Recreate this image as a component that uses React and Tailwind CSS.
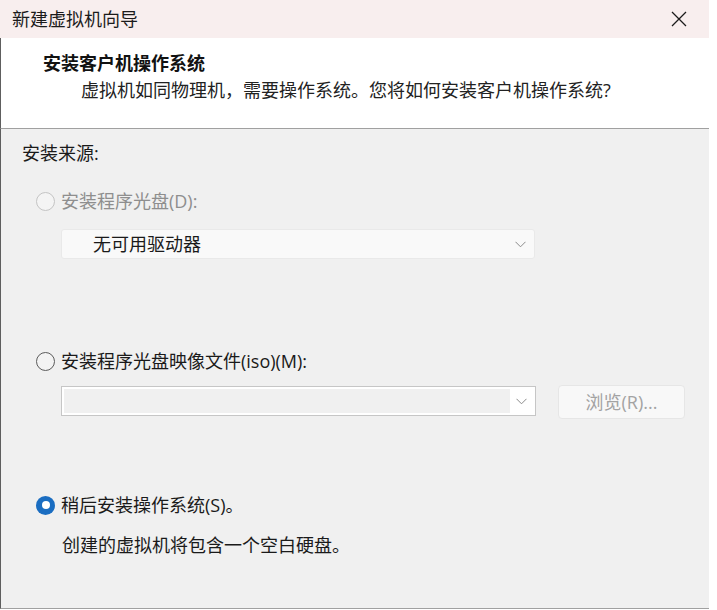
import React from "react";

const font = "font-['Open_Sans','Noto_Sans_CJK_SC',sans-serif]";

function Radio({ state }) {
  // state: "disabled" | "off" | "on"
  if (state === "on") {
    return (
      <span className="flex h-[19px] w-[19px] shrink-0 items-center justify-center rounded-full bg-[#1a6dc1]">
        <span className="h-[8px] w-[8px] rounded-full bg-white" />
      </span>
    );
  }
  const cls =
    state === "disabled"
      ? "border-[#c4c4c4] bg-[#f4f4f4]"
      : "border-[#5b5b5b] bg-[#f3f3f3]";
  return <span className={`h-[19px] w-[19px] shrink-0 rounded-full border ${cls}`} />;
}

function Chevron() {
  return (
    <svg width="11" height="7" viewBox="0 0 11 7" fill="none">
      <path d="M0.5 0.8 L5.5 5.8 L10.5 0.8" stroke="#8a8a8a" strokeWidth="1" />
    </svg>
  );
}

export default function App() {
  return (
    <div className={`w-[717px] h-[610px] bg-white ${font} text-[18px] text-[#1a1a1a]`}>
      <div className="flex h-[609px] w-[709px] flex-col">

        {/* Title bar */}
        <div className="flex h-[38px] shrink-0 items-center justify-between bg-[#f8eeee] pl-[12px] pr-[22px]">
          <span className="leading-[24px] text-[#1b1b1b]">新建虚拟机向导</span>
          <svg width="16" height="16" viewBox="0 0 16 16" fill="none">
            <path d="M1 1 L15 15 M15 1 L1 15" stroke="#1b1b1b" strokeWidth="1.3" />
          </svg>
        </div>

        {/* Header */}
        <div className="h-[91px] shrink-0 border-b border-l border-b-[#a0a0a0] border-l-[#5e5e5e] bg-white pl-[42px] pt-[13px]">
          <div className="font-bold leading-[24px] text-[#111]">安装客户机操作系统</div>
          <div className="mt-[3px] pl-[38px] leading-[24px] text-[#222]">
            虚拟机如同物理机，需要操作系统。您将如何安装客户机操作系统?
          </div>
        </div>

        {/* Body */}
        <div className="flex flex-1 flex-col border-b border-l border-b-[#a0a0a0] border-l-[#5e5e5e] bg-[#f0f0f0] pt-[12px]">
          <div className="pl-[21px] leading-[24px]">安装来源:</div>

          <div className="mt-[24px] flex items-center gap-[6px] pl-[35px]">
            <Radio state="disabled" />
            <span className="leading-[24px] text-[#8e8e8e]">安装程序光盘(D):</span>
          </div>

          <div className="ml-[60px] mt-[16px] flex h-[30px] w-[474px] items-center justify-between rounded-[3px] border border-[#e9e9e9] bg-[#f9f9f9] pl-[31px] pr-[8px]">
            <span className="leading-[24px]">无可用驱动器</span>
            <Chevron />
          </div>

          <div className="mt-[90px] flex items-center gap-[6px] pl-[35px]">
            <Radio state="off" />
            <span className="leading-[24px]">安装程序光盘映像文件(iso)(M):</span>
          </div>

          <div className="ml-[60px] mt-[12px] flex items-start gap-[22px]">
            <div className="mt-[1px] flex h-[30px] w-[475px] items-center justify-between border border-[#c6c6c6] bg-white p-[2px] pr-[8px]">
              <div className="h-full w-[446px] bg-[#f0f0f0]" />
              <Chevron />
            </div>
            <button className="flex h-[34px] w-[127px] items-center justify-center rounded-[4px] border border-[#e6e6e6] bg-[#f8f8f8] leading-[24px] text-[#a3a3a3]">
              浏览(R)...
            </button>
          </div>

          <div className="mt-[74px] flex items-center gap-[6px] pl-[35px]">
            <Radio state="on" />
            <span className="leading-[24px]">稍后安装操作系统(S)。</span>
          </div>

          <div className="mt-[16px] pl-[61px] leading-[24px]">创建的虚拟机将包含一个空白硬盘。</div>
        </div>
      </div>
    </div>
  );
}
